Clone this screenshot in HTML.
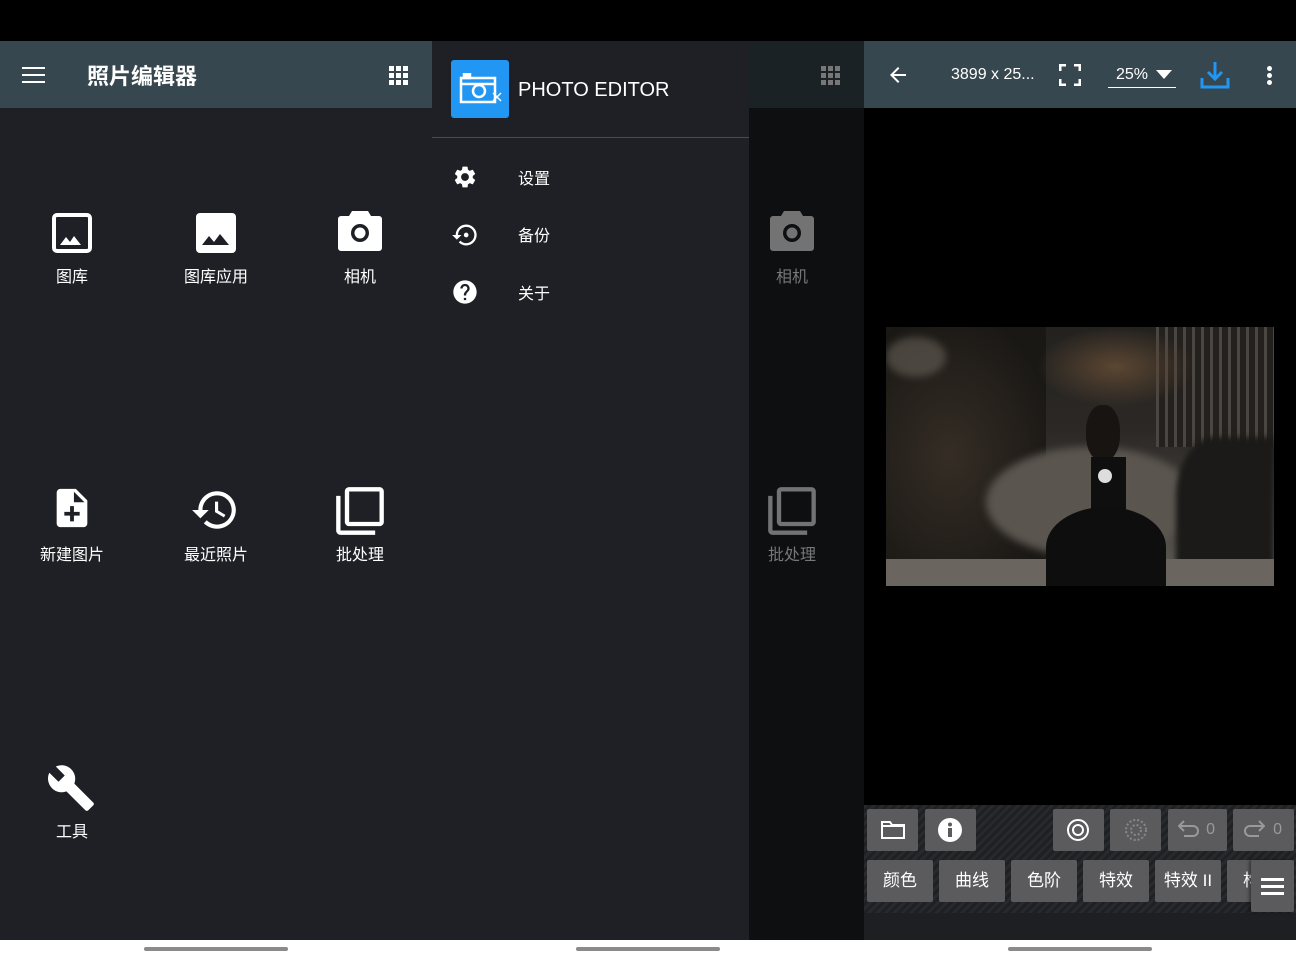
<!DOCTYPE html>
<html><head><meta charset="utf-8"><style>
*{margin:0;padding:0;box-sizing:border-box}
body{width:1296px;height:960px;overflow:hidden;background:#fff;font-family:"Liberation Sans","Noto Sans CJK SC",sans-serif;position:relative}
.a{position:absolute}
.lbl{position:absolute;width:144px;text-align:center;color:#fff;font-size:16px}
svg{position:absolute}
.btn{position:absolute;background:#5b5b5d;border-radius:2px;color:#fff;font-size:17px;text-align:center;line-height:42px}
</style></head><body>
<div class="a" style="left:0;top:0;width:1296px;height:41px;background:#000"></div>

<!-- panel 1 -->
<div class="a" style="left:0;top:41px;width:432px;height:899px;background:#1f2025"></div>
<div class="a" style="left:0;top:41px;width:432px;height:67px;background:#37474f"></div>
<div class="a" style="left:22px;top:67px;width:23px;height:2px;background:#fff;box-shadow:0 7px 0 #fff,0 14px 0 #fff"></div>
<div class="a" style="left:87px;top:59px;color:#fff;font-size:22px;font-weight:bold">照片编辑器</div>
<svg style="left:389px;top:66px" width="19" height="19" viewBox="0 0 19 19" fill="#fff"><rect x="0" y="0" width="5" height="5"/><rect x="7" y="0" width="5" height="5"/><rect x="14" y="0" width="5" height="5"/><rect x="0" y="7" width="5" height="5"/><rect x="7" y="7" width="5" height="5"/><rect x="14" y="7" width="5" height="5"/><rect x="0" y="14" width="5" height="5"/><rect x="7" y="14" width="5" height="5"/><rect x="14" y="14" width="5" height="5"/></svg>

<svg style="left:52px;top:213px" width="40" height="40" viewBox="0 0 40 40"><rect x="2" y="2" width="36" height="36" rx="3" fill="none" stroke="#fff" stroke-width="4"/><path d="M8 32l6-8 4 5 4-6 7 9z" fill="#fff"/></svg>
<div class="lbl" style="left:0;top:263px">图库</div>
<svg style="left:196px;top:213px" width="40" height="40" viewBox="0 0 40 40"><rect x="0" y="0" width="40" height="40" rx="4" fill="#fff"/><path d="M6 32l7-9 5 6 6-8 9 11z" fill="#1f2025"/></svg>
<div class="lbl" style="left:144px;top:263px">图库应用</div>
<svg style="left:338px;top:211px" width="44" height="40" viewBox="0 0 44 40"><path d="M14 0h16l3 5h8a3 3 0 0 1 3 3v29a3 3 0 0 1-3 3H3a3 3 0 0 1-3-3V8a3 3 0 0 1 3-3h8z" fill="#fff"/><circle cx="22" cy="22" r="9" fill="#1f2025"/><circle cx="22" cy="22" r="5.5" fill="#fff"/></svg>
<div class="lbl" style="left:288px;top:263px">相机</div>

<svg style="left:49px;top:485px" width="46" height="46" viewBox="0 0 24 24" fill="#fff"><path d="M14 2H6c-1.1 0-1.99.9-1.99 2L4 20c0 1.1.89 2 1.99 2H18c1.1 0 2-.9 2-2V8l-6-6zm2 14h-3v3h-2v-3H8v-2h3v-3h2v3h3v2zm-3-7V3.5L18.5 9H13z"/></svg>
<div class="lbl" style="left:0;top:541px">新建图片</div>
<svg style="left:190px;top:485px" width="50" height="50" viewBox="0 0 24 24" fill="#fff"><path d="M13 3c-4.97 0-9 4.03-9 9H1l3.89 3.89.07.14L9 12H6c0-3.87 3.13-7 7-7s7 3.13 7 7-3.13 7-7 7c-1.93 0-3.68-.79-4.94-2.06l-1.42 1.42C8.270 19.99 10.51 21 13 21c4.97 0 9-4.03 9-9s-4.03-9-9-9zm-1 5v5l4.28 2.54.72-1.21-3.5-2.08V8H12z"/></svg>
<div class="lbl" style="left:144px;top:541px">最近照片</div>
<svg style="left:334px;top:485px" width="52" height="52" viewBox="0 0 24 24" fill="#fff"><path d="M3 5H1v16c0 1.1.9 2 2 2h16v-2H3V5zm18-4H7c-1.1 0-2 .9-2 2v14c0 1.1.9 2 2 2h14c1.1 0 2-.9 2-2V3c0-1.1-.9-2-2-2zm0 16H7V3h14v14z"/></svg>
<div class="lbl" style="left:288px;top:541px">批处理</div>

<svg style="left:46px;top:763px" width="50" height="50" viewBox="0 0 24 24" fill="#fff"><path d="M22.7 19l-9.1-9.1c.9-2.3.4-5-1.5-6.9-2-2-5-2.4-7.4-1.3L9 6 6 9 1.6 4.7C.4 7.1.9 10.1 2.9 12.1c1.9 1.9 4.6 2.4 6.9 1.5l9.1 9.1c.4.4 1 .4 1.4 0l2.3-2.3c.5-.4.5-1.1.1-1.4z"/></svg>
<div class="lbl" style="left:0;top:818px">工具</div>

<!-- panel 2 -->
<div class="a" style="left:432px;top:41px;width:432px;height:899px;background:#0e0f11"></div>
<div class="a" style="left:749px;top:41px;width:115px;height:67px;background:#1b2226"></div>
<svg style="left:821px;top:66px" width="19" height="19" viewBox="0 0 19 19" fill="#777"><rect x="0" y="0" width="5" height="5"/><rect x="7" y="0" width="5" height="5"/><rect x="14" y="0" width="5" height="5"/><rect x="0" y="7" width="5" height="5"/><rect x="7" y="7" width="5" height="5"/><rect x="14" y="7" width="5" height="5"/><rect x="0" y="14" width="5" height="5"/><rect x="7" y="14" width="5" height="5"/><rect x="14" y="14" width="5" height="5"/></svg>
<svg style="left:770px;top:211px" width="44" height="40" viewBox="0 0 44 40"><path d="M14 0h16l3 5h8a3 3 0 0 1 3 3v29a3 3 0 0 1-3 3H3a3 3 0 0 1-3-3V8a3 3 0 0 1 3-3h8z" fill="#737373"/><circle cx="22" cy="22" r="9" fill="#0e0f11"/><circle cx="22" cy="22" r="5.5" fill="#737373"/></svg>
<div class="lbl" style="left:720px;top:263px;color:#777">相机</div>
<svg style="left:766px;top:485px" width="52" height="52" viewBox="0 0 24 24" fill="#737373"><path d="M3 5H1v16c0 1.1.9 2 2 2h16v-2H3V5zm18-4H7c-1.1 0-2 .9-2 2v14c0 1.1.9 2 2 2h14c1.1 0 2-.9 2-2V3c0-1.1-.9-2-2-2zm0 16H7V3h14v14z"/></svg>
<div class="lbl" style="left:720px;top:541px;color:#777">批处理</div>

<div class="a" style="left:432px;top:41px;width:317px;height:899px;background:#1f2025"></div>
<div class="a" style="left:432px;top:137px;width:317px;height:1px;background:#4a4b50"></div>
<div class="a" style="left:451px;top:60px;width:58px;height:58px;background:#2196f3;border-radius:3px"></div>
<svg style="left:459px;top:73px" width="46" height="32" viewBox="0 0 46 32" fill="none" stroke="#fff" stroke-width="2.5"><rect x="2" y="5" width="34" height="24"/><rect x="5" y="1" width="6" height="4" fill="#fff"/><line x1="2" y1="11" x2="36" y2="11"/><circle cx="20" cy="18" r="6"/><path d="M34 20l8 8M42 20l-8 8" stroke-width="1.5"/></svg>
<div class="a" style="left:518px;top:79px;color:#fff;font-size:20px">PHOTO EDITOR</div>
<svg style="left:452px;top:164px" width="26" height="26" viewBox="0 0 24 24" fill="#fff"><path d="M19.14 12.94c.04-.3.06-.61.06-.94 0-.32-.02-.64-.07-.94l2.03-1.58a.49.49 0 00.12-.61l-1.92-3.32a.488.488 0 00-.59-.22l-2.39.96c-.5-.38-1.03-.7-1.62-.94l-.36-2.54a.484.484 0 00-.48-.41h-3.84c-.24 0-.43.17-.47.41l-.36 2.54c-.59.24-1.13.57-1.62.94l-2.39-.96c-.22-.08-.47 0-.59.22L2.74 8.870c-.12.21-.08.47.12.61l2.03 1.58c-.05.3-.09.63-.09.94s.02.64.07.94l-2.03 1.58a.49.49 0 00-.12.61l1.92 3.32c.12.22.37.29.59.22l2.39-.96c.5.38 1.03.7 1.62.94l.36 2.54c.05.24.24.41.48.41h3.840c.24 0 .44-.17.47-.41l.36-2.54c.59-.24 1.13-.56 1.62-.94l2.39.96c.22.08.47 0 .59-.22l1.920-3.32c.12-.22.07-.47-.12-.61l-2.01-1.58zM12 15.6c-1.98 0-3.6-1.62-3.6-3.6s1.62-3.6 3.6-3.6 3.6 1.62 3.6 3.6-1.62 3.6-3.6 3.6z"/></svg>
<div class="a" style="left:518px;top:165px;color:#fff;font-size:16px">设置</div>
<svg style="left:451px;top:221px" width="28" height="28" viewBox="0 0 24 24" fill="#fff"><path d="M13 3a9 9 0 0 0-9 9H1l4 4 4-4H6a7 7 0 1 1 2.05 4.95l-1.42 1.42A9 9 0 1 0 13 3z"/><circle cx="13" cy="12" r="2"/></svg>
<div class="a" style="left:518px;top:222px;color:#fff;font-size:16px">备份</div>
<svg style="left:451px;top:278px" width="28" height="28" viewBox="0 0 24 24" fill="#fff"><path d="M12 2C6.48 2 2 6.480 2 12s4.48 10 10 10 10-4.48 10-10S17.52 2 12 2zm1 17h-2v-2h2v2zm2.07-7.75l-.9.92C13.45 12.9 13 13.5 13 15h-2v-.5c0-1.1.45-2.1 1.17-2.83l1.24-1.26c.37-.36.59-.86.59-1.41 0-1.1-.9-2-2-2s-2 .9-2 2H8c0-2.21 1.79-4 4-4s4 1.79 4 4c0 .88-.36 1.68-.93 2.25z"/></svg>
<div class="a" style="left:518px;top:280px;color:#fff;font-size:16px">关于</div>

<!-- panel 3 -->
<div class="a" style="left:864px;top:41px;width:432px;height:899px;background:#000"></div>
<div class="a" style="left:864px;top:41px;width:432px;height:67px;background:#37474f"></div>
<svg style="left:886px;top:63px" width="24" height="24" viewBox="0 0 24 24" fill="#fff"><path d="M20 11H7.83l5.59-5.59L12 4l-8 8 8 8 1.41-1.41L7.83 13H20v-2z"/></svg>
<div class="a" style="left:951px;top:66px;color:#fff;font-size:16px">3899 x 25...</div>
<svg style="left:1059px;top:64px" width="22" height="22" viewBox="0 0 22 22" fill="none" stroke="#fff" stroke-width="3"><path d="M1 7V1h6M15 1h6v6M21 15v6h-6M7 21H1v-6"/></svg>
<div class="a" style="left:1116px;top:66px;color:#fff;font-size:16px">25%</div>
<svg style="left:1156px;top:70px" width="16" height="9" viewBox="0 0 16 9" fill="#fff"><path d="M0 0h16L8 9z"/></svg>
<div class="a" style="left:1108px;top:87px;width:68px;height:1px;background:#fff"></div>
<svg style="left:1200px;top:61px" width="30" height="28" viewBox="0 0 30 28" fill="none" stroke="#2196f3" stroke-width="3"><path d="M15 1v17M8 11l7 7 7-7M2 17v9h26v-9"/></svg>
<div class="a" style="left:1267px;top:66px;width:5px;height:5px;border-radius:50%;background:#fff;box-shadow:0 7px 0 #fff,0 14px 0 #fff"></div>

<!-- photo -->
<div class="a" style="left:886px;top:327px;width:388px;height:259px;overflow:hidden;background:linear-gradient(180deg,#24221f 0%,#2b2825 40%,#48443f 70%,#5f5b55 100%)">
 <div class="a" style="left:0;top:0;width:160px;height:259px;background:radial-gradient(ellipse at 40% 50%,#352d25 0%,#1a1815 80%)"></div>
 <div class="a" style="left:270px;top:0;width:118px;height:120px;background:repeating-linear-gradient(90deg,#4a4641 0 3px,#24201d 3px 9px)"></div>
 <div class="a" style="left:100px;top:120px;width:210px;height:110px;border-radius:50%;background:#5a554f;filter:blur(4px)"></div>
 <div class="a" style="left:290px;top:110px;width:98px;height:149px;border-radius:40% 0 0 0;background:#1b1a18;filter:blur(3px)"></div>
 <div class="a" style="left:0;top:232px;width:388px;height:27px;background:#6a655e"></div>
 <div class="a" style="left:200px;top:78px;width:34px;height:56px;border-radius:45%;background:#171412"></div>
 <div class="a" style="left:205px;top:130px;width:35px;height:60px;background:#0f0f0f"></div>
 <div class="a" style="left:160px;top:180px;width:120px;height:80px;border-radius:50% 50% 0 0;background:#0e0e0e"></div>
 <div class="a" style="left:212px;top:142px;width:14px;height:14px;border-radius:50%;background:#ddd"></div>
 <div class="a" style="left:0;top:10px;width:60px;height:40px;border-radius:50%;background:#8a8278;opacity:.4;filter:blur(4px)"></div>
 <div class="a" style="left:150px;top:0;width:160px;height:80px;background:radial-gradient(ellipse,#5b4632 0%,transparent 70%)"></div>
</div>

<!-- bottom tools -->
<div class="a" style="left:864px;top:805px;width:432px;height:110px;background:repeating-linear-gradient(135deg,#28292c 0 3px,#1f2023 3px 6px)"></div>
<div class="a" style="left:864px;top:913px;width:432px;height:27px;background:#1e1f22"></div>
<div class="btn" style="left:867px;top:809px;width:51px;height:42px"></div>
<svg style="left:881px;top:821px" width="24" height="18" viewBox="0 0 24 18" fill="none" stroke="#fff" stroke-width="2"><path d="M1 1h8l2 3h12v13H1z"/><line x1="1" y1="5" x2="23" y2="5"/></svg>
<div class="btn" style="left:925px;top:809px;width:51px;height:42px"></div>
<svg style="left:938px;top:818px" width="24" height="24" viewBox="0 0 24 24"><circle cx="12" cy="12" r="12" fill="#fff"/><rect x="10" y="10" width="4" height="9" fill="#5b5b5d"/><circle cx="12" cy="6.5" r="2" fill="#5b5b5d"/></svg>
<div class="btn" style="left:1053px;top:809px;width:51px;height:42px"></div>
<svg style="left:1066px;top:818px" width="24" height="24" viewBox="0 0 24 24" fill="none" stroke="#fff" stroke-width="2"><circle cx="12" cy="12" r="10"/><circle cx="12" cy="12" r="5"/></svg>
<div class="btn" style="left:1110px;top:809px;width:51px;height:42px"></div>
<svg style="left:1124px;top:818px" width="24" height="24" viewBox="0 0 24 24" fill="none" stroke="#888" stroke-width="2" stroke-dasharray="2 2"><circle cx="12" cy="12" r="10"/><circle cx="12" cy="12" r="5"/></svg>
<div class="btn" style="left:1168px;top:809px;width:59px;height:42px;color:#999;font-size:16px;text-align:right;padding-right:12px">0</div>
<svg style="left:1178px;top:820px" width="22" height="18" viewBox="0 0 22 18" fill="none" stroke="#999" stroke-width="2"><path d="M6 1L1 6l5 5M1 6h14a5 5 0 0 1 0 10H6"/></svg>
<div class="btn" style="left:1233px;top:809px;width:61px;height:42px;color:#999;font-size:16px;text-align:right;padding-right:12px">0</div>
<svg style="left:1243px;top:820px" width="22" height="18" viewBox="0 0 22 18" fill="none" stroke="#999" stroke-width="2"><path d="M16 1l5 5-5 5M21 6H7a5 5 0 0 0 0 10h9"/></svg>

<div class="btn" style="left:867px;top:860px;width:66px;height:42px">颜色</div>
<div class="btn" style="left:939px;top:860px;width:66px;height:42px">曲线</div>
<div class="btn" style="left:1011px;top:860px;width:66px;height:42px">色阶</div>
<div class="btn" style="left:1083px;top:860px;width:66px;height:42px">特效</div>
<div class="btn" style="left:1155px;top:860px;width:66px;height:42px">特效 II</div>
<div class="btn" style="left:1227px;top:860px;width:40px;height:42px;overflow:hidden;text-align:left;padding-left:16px">构</div>
<div class="btn" style="left:1251px;top:860px;width:43px;height:52px;box-shadow:-2px 0 3px rgba(0,0,0,.4)"></div>
<div class="a" style="left:1261px;top:878px;width:23px;height:3px;background:#fff;box-shadow:0 7px 0 #fff,0 14px 0 #fff"></div>

<!-- nav handles -->
<div class="a" style="left:144px;top:947px;width:144px;height:4px;border-radius:2px;background:#8a8a8a"></div>
<div class="a" style="left:576px;top:947px;width:144px;height:4px;border-radius:2px;background:#8a8a8a"></div>
<div class="a" style="left:1008px;top:947px;width:144px;height:4px;border-radius:2px;background:#8a8a8a"></div>
</body></html>
